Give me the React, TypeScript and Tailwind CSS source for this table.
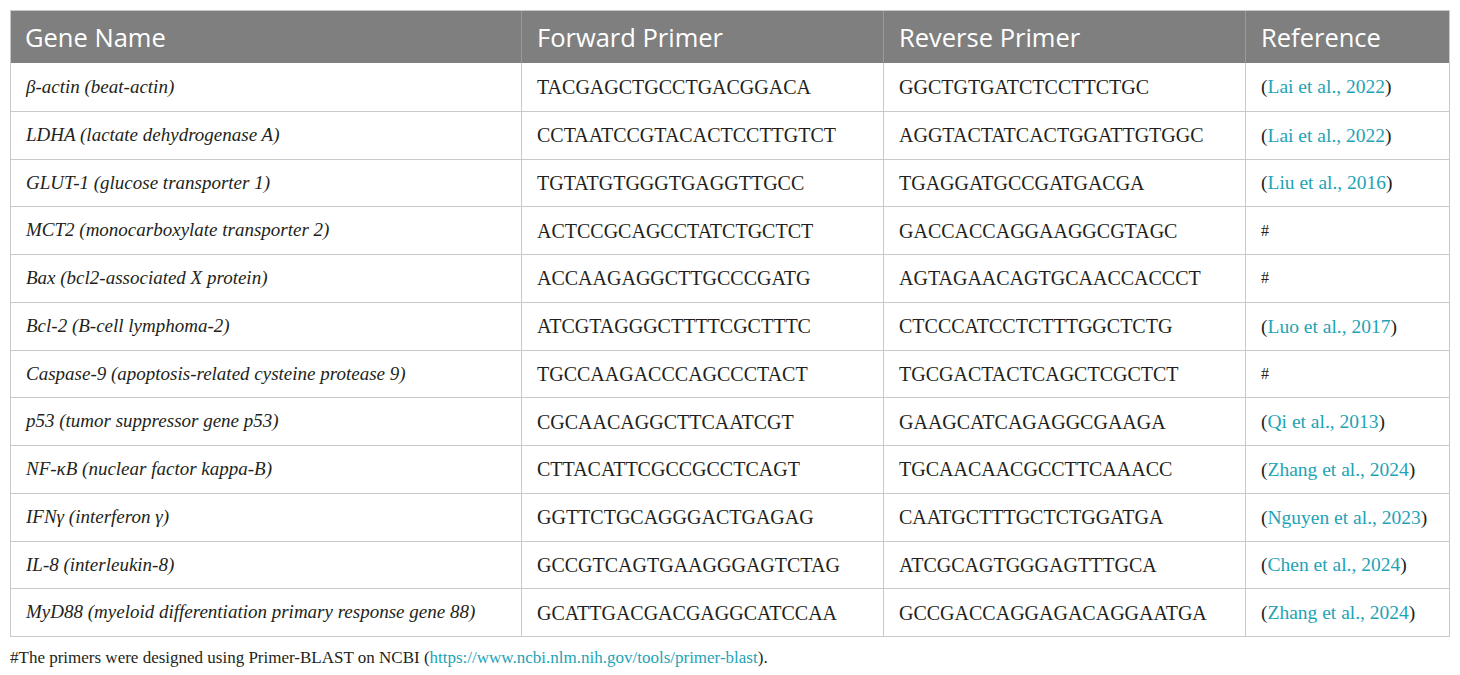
import React from "react";

type Row = { gene: React.ReactNode; fwd: string; rev: string; ref: string | null };

const rows: Row[] = [
  { gene: "β-actin (beat-actin)", fwd: "TACGAGCTGCCTGACGGACA", rev: "GGCTGTGATCTCCTTCTGC", ref: "Lai et al., 2022" },
  { gene: "LDHA (lactate dehydrogenase A)", fwd: "CCTAATCCGTACACTCCTTGTCT", rev: "AGGTACTATCACTGGATTGTGGC", ref: "Lai et al., 2022" },
  { gene: "GLUT-1 (glucose transporter 1)", fwd: "TGTATGTGGGTGAGGTTGCC", rev: "TGAGGATGCCGATGACGA", ref: "Liu et al., 2016" },
  { gene: "MCT2 (monocarboxylate transporter 2)", fwd: "ACTCCGCAGCCTATCTGCTCT", rev: "GACCACCAGGAAGGCGTAGC", ref: null },
  { gene: "Bax (bcl2-associated X protein)", fwd: "ACCAAGAGGCTTGCCCGATG", rev: "AGTAGAACAGTGCAACCACCCT", ref: null },
  { gene: "Bcl-2 (B-cell lymphoma-2)", fwd: "ATCGTAGGGCTTTTCGCTTTC", rev: "CTCCCATCCTCTTTGGCTCTG", ref: "Luo et al., 2017" },
  { gene: "Caspase-9 (apoptosis-related cysteine protease 9)", fwd: "TGCCAAGACCCAGCCCTACT", rev: "TGCGACTACTCAGCTCGCTCT", ref: null },
  { gene: "p53 (tumor suppressor gene p53)", fwd: "CGCAACAGGCTTCAATCGT", rev: "GAAGCATCAGAGGCGAAGA", ref: "Qi et al., 2013" },
  { gene: "NF-κB (nuclear factor kappa-B)", fwd: "CTTACATTCGCCGCCTCAGT", rev: "TGCAACAACGCCTTCAAACC", ref: "Zhang et al., 2024" },
  { gene: "IFNγ (interferon γ)", fwd: "GGTTCTGCAGGGACTGAGAG", rev: "CAATGCTTTGCTCTGGATGA", ref: "Nguyen et al., 2023" },
  { gene: "IL-8 (interleukin-8)", fwd: "GCCGTCAGTGAAGGGAGTCTAG", rev: "ATCGCAGTGGGAGTTTGCA", ref: "Chen et al., 2024" },
  { gene: "MyD88 (myeloid differentiation primary response gene 88)", fwd: "GCATTGACGACGAGGCATCCAA", rev: "GCCGACCAGGAGACAGGAATGA", ref: "Zhang et al., 2024" },
];

const serif = "font-['Liberation_Serif','Times_New_Roman',serif]";
const sans = "font-['Open_Sans','Noto_Sans',sans-serif]";

export default function App() {
  return (
    <div className="w-[1460px] h-[675px] bg-white pl-[10px] pt-[10px]">
      <div className="w-[1440px] border border-[#c9c9c9]">
        <div className={`grid grid-cols-[511px_362px_362px_1fr] h-[52px] bg-[#7f7f7f] text-white text-[25.5px] ${sans}`}>
          <div className="flex items-center pl-[14px] border-r border-[#9a9a9a]">Gene Name</div>
          <div className="flex items-center pl-[15px] border-r border-[#9a9a9a]">Forward Primer</div>
          <div className="flex items-center pl-[15px] border-r border-[#9a9a9a]">Reverse Primer</div>
          <div className="flex items-center pl-[15px]">Reference</div>
        </div>
        {rows.map((r, i) => (
          <div
            key={i}
            className={`grid grid-cols-[511px_362px_362px_1fr] h-[47.75px] text-[#231f20] ${serif} ${i > 0 ? "border-t border-[#c9c9c9]" : ""}`}
          >
            <div className="flex items-center pl-[15px] border-r border-[#c9c9c9] italic text-[19px]">{r.gene}</div>
            <div className="flex items-center pl-[15px] border-r border-[#c9c9c9] text-[20px]">{r.fwd}</div>
            <div className="flex items-center pl-[15px] border-r border-[#c9c9c9] text-[20px]">{r.rev}</div>
            <div className="flex items-center pl-[15px] text-[19.5px]">
              {r.ref ? (
                <span>
                  (<span className="text-[#1ea3b6]">{r.ref}</span>)
                </span>
              ) : (
                <span className="text-[16px]">#</span>
              )}
            </div>
          </div>
        ))}
      </div>
      <div className={`mt-[8px] text-[17px] text-[#231f20] ${serif}`}>
        #The primers were designed using Primer-BLAST on NCBI (
        <span className="text-[#1ea3b6]">https://www.ncbi.nlm.nih.gov/tools/primer-blast</span>).
      </div>
    </div>
  );
}
